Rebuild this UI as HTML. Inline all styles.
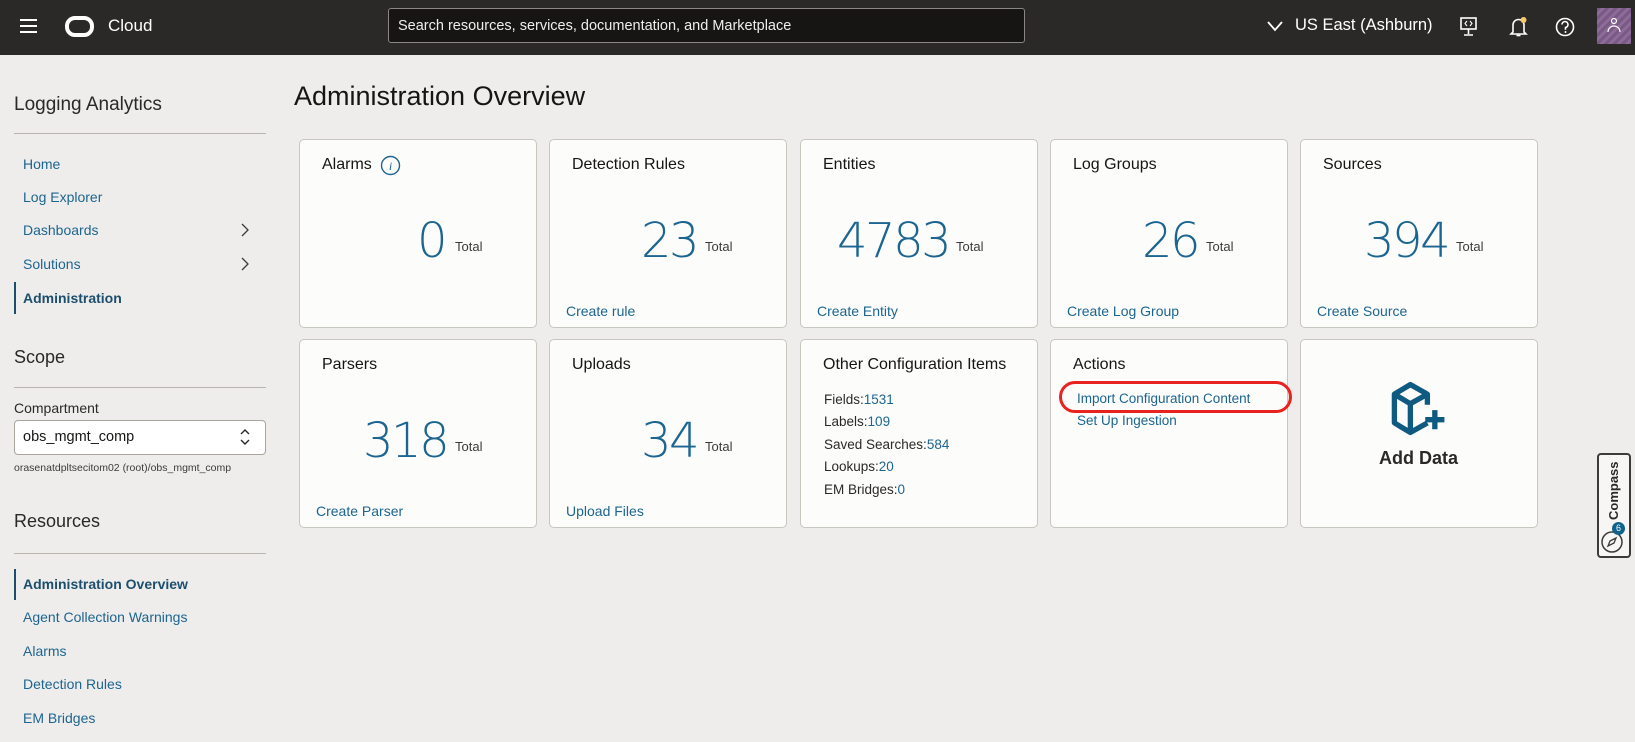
<!DOCTYPE html>
<html><head><meta charset="utf-8"><style>
*{box-sizing:border-box;margin:0;padding:0}
body{width:1635px;height:742px;overflow:hidden;background:#efedeb;font-family:"Liberation Sans",Arial,sans-serif;color:#161513;position:relative}
.a{position:absolute;white-space:nowrap}
.hdr{position:absolute;left:0;top:0;width:1635px;height:55px;background:#2b2927}
.nav{font-size:14px;color:#1c6590;left:23px}
.line{position:absolute;height:1px;background:#b8b4ae}
.card{position:absolute;width:238px;height:189px;background:#fcfcfb;border:1px solid #c9c5bf;border-radius:5px}
.ct{position:absolute;left:22px;top:16px;font-size:16px;color:#161513}
.num{position:absolute;top:77px;font-family:"DejaVu Sans",sans-serif;font-size:48px;font-weight:200;color:#1c6590;line-height:1;letter-spacing:-2.5px}
.tot{position:absolute;top:99px;font-size:13px;color:#3d3b38}
.cl{position:absolute;left:16px;top:163px;font-size:14px;color:#1c6590}
.li{position:absolute;left:23px;font-size:13.5px;color:#2b2927}
.li span{color:#1c6590}
</style></head><body>
<div class="hdr">
 <div class="a" style="left:20px;top:19px;width:17px;height:2px;background:#fff;box-shadow:0 6px 0 #fff,0 12px 0 #fff"></div>
 <div class="a" style="left:65px;top:16px;width:29px;height:21px;border:4px solid #fff;border-radius:10px"></div>
 <div class="a" style="left:108px;top:16px;font-size:17px;color:#fff">Cloud</div>
 <div class="a" style="left:388px;top:8px;width:637px;height:35px;background:#161513;border:1px solid #8a8783;border-radius:3px"></div>
 <div class="a" style="left:398px;top:18px;font-size:14.5px;color:#f0eeec">Search resources, services, documentation, and Marketplace</div>
 <svg class="a" style="left:1266px;top:19px" width="18" height="14"><path d="M2 3l7 8 7-8" stroke="#fff" stroke-width="1.8" fill="none"/></svg>
 <div class="a" style="left:1295px;top:16px;font-size:16.5px;color:#fff">US East (Ashburn)</div>
 <svg class="a" style="left:1459px;top:16px" width="20" height="22"><rect x="2" y="2" width="15" height="11" stroke="#fff" stroke-width="1.6" fill="none"/><path d="M9.5 13v5M5 19h9" stroke="#fff" stroke-width="1.6"/><path d="M8 5l-2 2.5 2 2.5M11 5l2 2.5-2 2.5" stroke="#fff" stroke-width="1.1" fill="none"/></svg>
 <svg class="a" style="left:1508px;top:15px" width="22" height="24"><path d="M5 17V10a5.5 5.5 0 0 1 11 0v7l2 2H3z" stroke="#fff" stroke-width="1.6" fill="none"/><path d="M8.5 20.5h4" stroke="#fff" stroke-width="1.6"/><circle cx="15.5" cy="5" r="3" fill="#f7c96a"/></svg>
 <svg class="a" style="left:1554px;top:16px" width="22" height="22"><circle cx="11" cy="11" r="8.5" stroke="#fff" stroke-width="1.6" fill="none"/><path d="M8 8.5a3 3 0 1 1 3.5 3v2.2" stroke="#fff" stroke-width="1.6" fill="none"/><circle cx="11.5" cy="16" r="1" fill="#fff"/></svg>
 <div class="a" style="left:1597px;top:8px;width:34px;height:36px;background:repeating-linear-gradient(135deg,#7a5a85 0 3px,#8e6c99 3px 6px)"></div>
 <svg class="a" style="left:1605px;top:16px" width="18" height="20"><circle cx="9" cy="5" r="2.5" stroke="#fff" stroke-width="1.2" fill="none"/><path d="M3 16a6 6 0 0 1 12 0" stroke="#fff" stroke-width="1.2" fill="none"/></svg>
</div>

<div class="a" style="left:14px;top:94px;font-size:19px;color:#2b2927">Logging Analytics</div>
<div class="line" style="left:14px;top:133px;width:252px"></div>
<div class="a nav" style="top:156px">Home</div>
<div class="a nav" style="top:189px">Log Explorer</div>
<div class="a nav" style="top:222px">Dashboards</div>
<div class="a nav" style="top:256px">Solutions</div>
<svg class="a" style="left:240px;top:222px" width="10" height="16"><path d="M2 2l6 6-6 6" stroke="#3d3b38" stroke-width="1.3" fill="none"/></svg>
<svg class="a" style="left:240px;top:256px" width="10" height="16"><path d="M2 2l6 6-6 6" stroke="#3d3b38" stroke-width="1.3" fill="none"/></svg>
<div class="a" style="left:14px;top:282px;width:2px;height:32px;background:#1c4f6e"></div>
<div class="a nav" style="top:290px;font-weight:bold;color:#1c4f6e">Administration</div>

<div class="a" style="left:14px;top:347px;font-size:18px;color:#2b2927">Scope</div>
<div class="line" style="left:14px;top:387px;width:252px"></div>
<div class="a" style="left:14px;top:400px;font-size:14px;color:#2b2927">Compartment</div>
<div class="a" style="left:14px;top:420px;width:252px;height:35px;background:#fff;border:1px solid #a8a49e;border-radius:4px"></div>
<div class="a" style="left:23px;top:429px;font-size:14.5px;color:#161513">obs_mgmt_comp</div>
<svg class="a" style="left:239px;top:426px" width="12" height="22"><path d="M2 8l4-4 4 4M2 14l4 4 4-4" stroke="#2b2927" stroke-width="1.4" fill="none"/></svg>
<div class="a" style="left:14px;top:462px;font-size:10.5px;color:#3d3b38">orasenatdpltsecitom02 (root)/obs_mgmt_comp</div>

<div class="a" style="left:14px;top:511px;font-size:18px;color:#2b2927">Resources</div>
<div class="line" style="left:14px;top:553px;width:252px"></div>
<div class="a" style="left:14px;top:569px;width:2px;height:31px;background:#1c4f6e"></div>
<div class="a nav" style="top:576px;font-weight:bold;color:#1c4f6e">Administration Overview</div>
<div class="a nav" style="top:609px">Agent Collection Warnings</div>
<div class="a nav" style="top:643px">Alarms</div>
<div class="a nav" style="top:676px">Detection Rules</div>
<div class="a nav" style="top:710px">EM Bridges</div>

<div class="a" style="left:294px;top:81px;font-size:27px;color:#161513">Administration Overview</div>

<div class="card" style="left:299px;top:139px"><div class="ct">Alarms</div>
 <svg class="a" style="left:80px;top:15px" width="21" height="21"><circle cx="10.5" cy="10.5" r="9" stroke="#1c6590" stroke-width="1.4" fill="none"/><text x="10.5" y="15" font-size="12" font-style="italic" text-anchor="middle" fill="#1c6590" font-family="Liberation Serif">i</text></svg>
 <div class="num" style="left:117px">0</div><div class="tot" style="left:155px">Total</div></div>
<div class="card" style="left:549px;top:139px"><div class="ct">Detection Rules</div>
 <div class="num" style="left:91px">23</div><div class="tot" style="left:155px">Total</div><div class="cl">Create rule</div></div>
<div class="card" style="left:800px;top:139px"><div class="ct">Entities</div>
 <div class="num" style="left:36px">4783</div><div class="tot" style="left:155px">Total</div><div class="cl">Create Entity</div></div>
<div class="card" style="left:1050px;top:139px"><div class="ct">Log Groups</div>
 <div class="num" style="left:91px">26</div><div class="tot" style="left:155px">Total</div><div class="cl">Create Log Group</div></div>
<div class="card" style="left:1300px;top:139px"><div class="ct">Sources</div>
 <div class="num" style="left:63px">394</div><div class="tot" style="left:155px">Total</div><div class="cl">Create Source</div></div>

<div class="card" style="left:299px;top:339px"><div class="ct">Parsers</div>
 <div class="num" style="left:63px">318</div><div class="tot" style="left:155px">Total</div><div class="cl">Create Parser</div></div>
<div class="card" style="left:549px;top:339px"><div class="ct">Uploads</div>
 <div class="num" style="left:91px">34</div><div class="tot" style="left:155px">Total</div><div class="cl">Upload Files</div></div>
<div class="card" style="left:800px;top:339px"><div class="ct">Other Configuration Items</div>
 <div class="li" style="top:52px">Fields:<span>1531</span></div>
 <div class="li" style="top:74px">Labels:<span>109</span></div>
 <div class="li" style="top:97px">Saved Searches:<span>584</span></div>
 <div class="li" style="top:119px">Lookups:<span>20</span></div>
 <div class="li" style="top:142px">EM Bridges:<span>0</span></div></div>
<div class="card" style="left:1050px;top:339px"><div class="ct">Actions</div>
 <div class="li" style="top:51px;left:26px;color:#1c6590">Import Configuration Content</div>
 <div class="li" style="top:73px;left:26px;color:#1c6590">Set Up Ingestion</div></div>
<div class="a" style="left:1059px;top:381px;width:233px;height:32px;border:3px solid #e8231f;border-radius:16px"></div>
<div class="card" style="left:1300px;top:339px">
 <svg class="a" style="left:88px;top:35px" width="64" height="66" viewBox="0 0 60 62"><path d="M36 45L20 54 5 45V18L20 9l16 9v10M5 18l15 9 16-9M20 27v27" stroke="#0e5a80" stroke-width="5" fill="none" stroke-linejoin="round"/><path d="M43 33v18M34 42h18" stroke="#0e5a80" stroke-width="5"/></svg>
 <div class="a" style="left:78px;top:108px;font-size:18px;font-weight:bold;color:#2b2927">Add Data</div></div>

<div class="a" style="left:1597px;top:453px;width:34px;height:105px;background:#f7f6f4;border:2px solid #3d3b38;border-radius:4px"></div>
<div class="a" style="left:1606px;top:520px;font-size:13px;font-weight:bold;color:#2b2927;transform:rotate(-90deg);transform-origin:0 0">Compass</div>
<svg class="a" style="left:1599px;top:529px" width="26" height="26"><circle cx="13" cy="13" r="10" stroke="#3d3b38" stroke-width="1.5" fill="none"/><path d="M17 9l-6 3-2 5 6-3z" stroke="#3d3b38" stroke-width="1.3" fill="none"/></svg>
<div class="a" style="left:1612px;top:522px;width:13px;height:13px;border-radius:50%;background:#11628a;color:#fff;font-size:9px;text-align:center;line-height:13px">6</div>
</body></html>
